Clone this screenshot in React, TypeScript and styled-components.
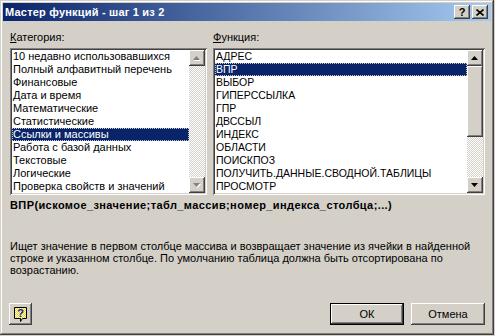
import styled, { createGlobalStyle } from 'styled-components';

const GlobalStyle = createGlobalStyle`
  html, body {
    margin: 0;
    padding: 0;
    background: #d4d0c8;
  }
  body {
    font-family: "Liberation Sans", Arial, sans-serif;
    font-size: 11px;
    color: #000;
  }
`;

const raised = `
  box-shadow: inset -1px -1px #404040, inset 1px 1px #ffffff,
    inset -2px -2px #808080, inset 2px 2px #d4d0c8;
`;

const Window = styled.div`
  width: 494px;
  height: 335px;
  box-sizing: border-box;
  background: #d4d0c8;
  box-shadow: inset -1px -1px #404040, inset 1px 1px #d4d0c8,
    inset -2px -2px #808080, inset 2px 2px #ffffff;
  display: flex;
  flex-direction: column;
`;

const TitleBar = styled.div`
  height: 18px;
  margin: 3px 3px 0 3px;
  padding: 0 3px 0 2px;
  display: flex;
  align-items: center;
  background: linear-gradient(to right, #0a246a, #a6caf0);
`;

const Title = styled.div`
  flex: 1;
  color: #fff;
  font-weight: bold;
  font-size: 11px;
  letter-spacing: 0.2px;
`;

const CaptionButton = styled.div<{ $gap?: number }>`
  width: 16px;
  height: 14px;
  margin-left: ${(p) => p.$gap ?? 0}px;
  background: #d4d0c8;
  ${raised}
  display: flex;
  align-items: center;
  justify-content: center;
  font-weight: bold;
  font-size: 11px;
  line-height: 14px;
`;

const Content = styled.div`
  flex: 1;
  display: flex;
  flex-direction: column;
  padding: 10px 9px 10px 10px;
`;

const Columns = styled.div`
  display: grid;
  grid-template-columns: 197px 272px;
  column-gap: 6px;
`;

const Column = styled.div`
  display: flex;
  flex-direction: column;
`;

const Label = styled.div`
  height: 13px;
  line-height: 13px;
  margin-bottom: 4px;
  u {
    text-decoration: underline;
  }
`;

const ListBox = styled.div`
  height: 147px;
  box-sizing: border-box;
  padding: 2px;
  background: #fff;
  box-shadow: inset 1px 1px #808080, inset -1px -1px #ffffff,
    inset 2px 2px #404040, inset -2px -2px #d4d0c8;
  display: flex;
`;

const Items = styled.div`
  flex: 1;
  overflow: hidden;
`;

const Item = styled.div<{ $selected?: boolean; $caps?: boolean }>`
  height: 13px;
  line-height: 13px;
  padding-left: 1px;
  white-space: nowrap;
  box-sizing: border-box;
  font-size: ${(p) => (p.$caps ? '10.5px' : '11px')};
  background: ${(p) => (p.$selected ? '#0a246a' : 'transparent')};
  color: ${(p) => (p.$selected ? '#fff' : '#000')};
  outline: ${(p) => (p.$selected ? '1px dotted #c8c8c8' : 'none')};
  outline-offset: -1px;
`;

const ScrollBar = styled.div`
  width: 16px;
  display: flex;
  flex-direction: column;
`;

const ScrollButton = styled.div`
  width: 16px;
  height: 16px;
  flex: none;
  background: #d4d0c8;
  ${raised}
  display: flex;
  align-items: center;
  justify-content: center;
`;

const Track = styled.div`
  flex: 1;
  display: flex;
  flex-direction: column;
  background-image: repeating-conic-gradient(#ffffff 0 25%, #d4d0c8 0 50%);
  background-size: 2px 2px;
`;

const Thumb = styled.div<{ $h: number }>`
  height: ${(p) => p.$h}px;
  flex: none;
  background: #d4d0c8;
  ${raised}
`;

const Syntax = styled.div`
  margin-top: 4px;
  height: 13px;
  line-height: 13px;
  font-weight: bold;
  font-size: 11px;
  letter-spacing: 0.4px;
`;

const Description = styled.div`
  margin-top: 28px;
  line-height: 12px;
  font-size: 11px;
  width: 476px;
`;

const Footer = styled.div`
  margin-top: auto;
  display: flex;
  align-items: center;
`;

const HelpButton = styled.div`
  width: 23px;
  height: 22px;
  margin-left: -1px;
  background: #d4d0c8;
  ${raised}
  display: flex;
  align-items: center;
  justify-content: center;
`;

const Spacer = styled.div`
  flex: 1;
`;

const PushButton = styled.div<{ $default?: boolean }>`
  width: 74px;
  height: 22px;
  box-sizing: border-box;
  margin-left: 7px;
  background: #d4d0c8;
  display: flex;
  align-items: center;
  justify-content: center;
  ${(p) =>
    p.$default
      ? `border: 1px solid #000;
         box-shadow: inset -1px -1px #404040, inset 1px 1px #ffffff, inset -2px -2px #808080;`
      : raised}
`;

const Arrow = ({ down, disabled }: { down?: boolean; disabled?: boolean }) => {
  const pts = down ? '0,0 7,0 3.5,4' : '3.5,0 7,4 0,4';
  return (
    <svg width="8" height="5" viewBox="0 0 8 5" style={{ overflow: 'visible' }}>
      {disabled && <polygon points={pts} fill="#fff" transform="translate(1,1)" />}
      <polygon points={pts} fill={disabled ? '#808080' : '#000'} />
    </svg>
  );
};

const categories = [
  '10 недавно использовавшихся',
  'Полный алфавитный перечень',
  'Финансовые',
  'Дата и время',
  'Математические',
  'Статистические',
  'Ссылки и массивы',
  'Работа с базой данных',
  'Текстовые',
  'Логические',
  'Проверка свойств и значений',
];

const functions = [
  'АДРЕС',
  'ВПР',
  'ВЫБОР',
  'ГИПЕРССЫЛКА',
  'ГПР',
  'ДВССЫЛ',
  'ИНДЕКС',
  'ОБЛАСТИ',
  'ПОИСКПОЗ',
  'ПОЛУЧИТЬ.ДАННЫЕ.СВОДНОЙ.ТАБЛИЦЫ',
  'ПРОСМОТР',
];

export default function App() {
  return (
    <>
      <GlobalStyle />
      <Window>
        <TitleBar>
          <Title>Мастер функций - шаг 1 из 2</Title>
          <CaptionButton>?</CaptionButton>
          <CaptionButton $gap={2}>
            <svg width="8" height="7" viewBox="0 0 8 7">
              <path d="M0.5 0.5 L7.5 6.5 M7.5 0.5 L0.5 6.5" stroke="#000" strokeWidth="1.6" />
            </svg>
          </CaptionButton>
        </TitleBar>
        <Content>
          <Columns>
            <Column>
              <Label>
                <u>К</u>атегория:
              </Label>
              <ListBox>
                <Items>
                  {categories.map((c, i) => (
                    <Item key={c} $selected={i === 6}>
                      {c}
                    </Item>
                  ))}
                </Items>
                <ScrollBar>
                  <ScrollButton>
                    <Arrow disabled />
                  </ScrollButton>
                  <Track />
                  <ScrollButton>
                    <Arrow down disabled />
                  </ScrollButton>
                </ScrollBar>
              </ListBox>
            </Column>
            <Column>
              <Label>
                <u>Ф</u>ункция:
              </Label>
              <ListBox>
                <Items>
                  {functions.map((f, i) => (
                    <Item key={f} $caps $selected={i === 1}>
                      {f}
                    </Item>
                  ))}
                </Items>
                <ScrollBar>
                  <ScrollButton>
                    <Arrow />
                  </ScrollButton>
                  <Track>
                    <Thumb $h={71} />
                  </Track>
                  <ScrollButton>
                    <Arrow down />
                  </ScrollButton>
                </ScrollBar>
              </ListBox>
            </Column>
          </Columns>
          <Syntax>ВПР(искомое_значение;табл_массив;номер_индекса_столбца;...)</Syntax>
          <Description>
            Ищет значение в первом столбце массива и возвращает значение из ячейки в найденной
            строке и указанном столбце. По умолчанию таблица должна быть отсортирована по
            возрастанию.
          </Description>
          <Footer>
            <HelpButton>
              <svg width="15" height="17" viewBox="0 0 15 17">
                <defs>
                  <pattern id="dots" width="2" height="2" patternUnits="userSpaceOnUse">
                    <rect width="2" height="2" fill="#ffffff" />
                    <rect width="1" height="1" fill="#e8d800" />
                    <rect x="1" y="1" width="1" height="1" fill="#e8d800" />
                  </pattern>
                </defs>
                <path
                  d="M1.5 1.5 H13.5 V12.5 H9.5 L7.5 15.5 V12.5 H1.5 Z"
                  fill="url(#dots)"
                  stroke="#000"
                  strokeWidth="1"
                />
                <text
                  x="7.5"
                  y="11"
                  textAnchor="middle"
                  fontFamily="Liberation Sans, Arial, sans-serif"
                  fontWeight="bold"
                  fontSize="11"
                  fill="#1020a0"
                >
                  ?
                </text>
              </svg>
            </HelpButton>
            <Spacer />
            <PushButton $default>ОК</PushButton>
            <PushButton>Отмена</PushButton>
          </Footer>
        </Content>
      </Window>
    </>
  );
}
